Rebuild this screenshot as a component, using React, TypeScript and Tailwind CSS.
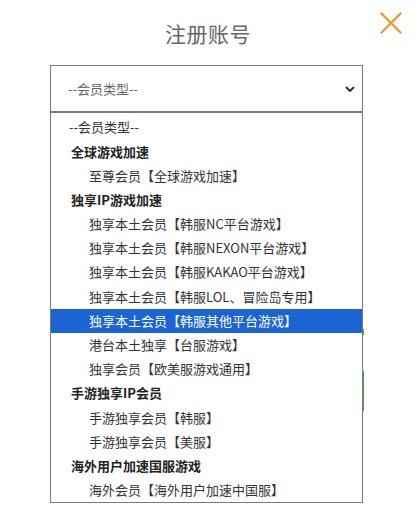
import React from "react";

type Row = { label: string; kind: "placeholder" | "group" | "option"; selected?: boolean };

const rows: Row[] = [
  { label: "--会员类型--", kind: "placeholder" },
  { label: "全球游戏加速", kind: "group" },
  { label: "至尊会员【全球游戏加速】", kind: "option" },
  { label: "独享IP游戏加速", kind: "group" },
  { label: "独享本土会员【韩服NC平台游戏】", kind: "option" },
  { label: "独享本土会员【韩服NEXON平台游戏】", kind: "option" },
  { label: "独享本土会员【韩服KAKAO平台游戏】", kind: "option" },
  { label: "独享本土会员【韩服LOL、冒险岛专用】", kind: "option" },
  { label: "独享本土会员【韩服其他平台游戏】", kind: "option", selected: true },
  { label: "港台本土独享【台服游戏】", kind: "option" },
  { label: "独享会员【欧美服游戏通用】", kind: "option" },
  { label: "手游独享IP会员", kind: "group" },
  { label: "手游独享会员【韩服】", kind: "option" },
  { label: "手游独享会员【美服】", kind: "option" },
  { label: "海外用户加速国服游戏", kind: "group" },
  { label: "海外会员【海外用户加速中国服】", kind: "option" },
];

export default function App() {
  return (
    <div className="relative w-[416px] h-[521px] bg-white overflow-hidden font-['Noto_Sans_CJK_SC','Noto_Sans',sans-serif]">
      {/* Header */}
      <div className="relative flex h-[65px] items-start justify-center pt-[18px]">
        <h1 className="text-[21px] leading-[30px] text-[#666] tracking-[0.5px] font-normal">注册账号</h1>
        <button className="absolute right-[14px] top-[12px] w-[22px] h-[22px]" aria-label="close">
          <svg viewBox="0 0 22 22" width="22" height="22">
            <path d="M1.5 1.5 L20.5 20.5 M20.5 1.5 L1.5 20.5" stroke="#f0962a" strokeWidth="2.2" strokeLinecap="square" fill="none" />
          </svg>
        </button>
      </div>

      {/* Select */}
      <div className="ml-[50px] w-[313px] h-[48px] border border-[#7a7a7a] border-b-2 flex items-center justify-between pl-[17px] pr-[4px]">
        <span className="text-[13px] text-[#666]">--会员类型--</span>
        <svg viewBox="0 0 10 6" width="10" height="6" className="mr-[3px]">
          <path d="M1 1 L5 5 L9 1" stroke="#333" strokeWidth="2" fill="none" />
        </svg>
      </div>

      {/* Content behind dropdown */}
      <div className="ml-[50px] w-[314px] mt-[216px] h-[6px] bg-[#4a9a4a]" />
      <div className="ml-[50px] w-[314px] mt-[35px] h-[42px] bg-[#4a9a4a] rounded-[2px]" />

      {/* Dropdown listbox */}
      <div className="absolute left-[50px] top-[113px] w-[313px] bg-white border border-[#7a7a7a] border-t-0 pt-[2px]">
        {rows.map((r, i) => (
          <div
            key={i}
            className={
              "h-[24.2px] flex items-center text-[13px] whitespace-nowrap " +
              (r.kind === "placeholder"
                ? "pl-[18px] text-[#333] "
                : r.kind === "group"
                ? "pl-[20px] font-bold text-[#222] "
                : "pl-[38px] text-[#333] ") +
              (r.selected ? "bg-[#1b64d3] text-white" : "")
            }
          >
            {r.label}
          </div>
        ))}
      </div>
    </div>
  );
}
